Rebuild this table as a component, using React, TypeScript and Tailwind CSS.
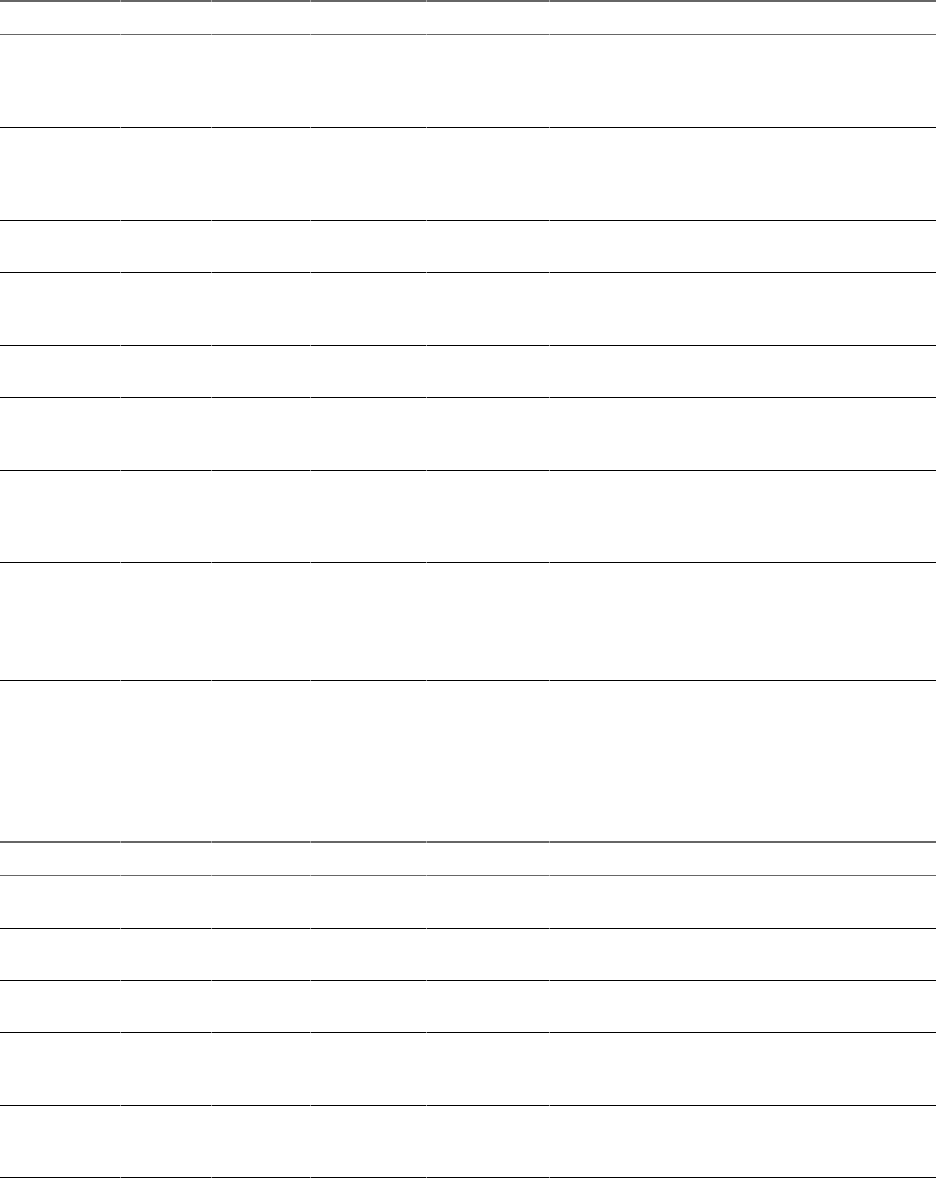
import React from "react";

const COLS = ["w-[120px]", "w-[90px]", "w-[98px]", "w-[115px]", "w-[122px]", "w-[386px]"];

function HeaderRow() {
  return (
    <div className="flex gap-px border-t-2 border-b border-[#a8a8a8]">
      {COLS.map((c, i) => (
        <div
          key={i}
          className={`${c} shrink-0 h-[35px] -mt-[2px] -mb-px border-t-2 border-b border-[#666666]`}
        />
      ))}
    </div>
  );
}

function BodyRow({ h }: { h: number }) {
  return (
    <div className="flex gap-px border-b border-[#8c8c8c]">
      {COLS.map((c, i) => (
        <div
          key={i}
          className={`${c} shrink-0 -mb-px border-b border-black`}
          style={{ height: h }}
        />
      ))}
    </div>
  );
}

export default function App() {
  const t1 = [93, 93, 52, 73, 52, 73, 92, 118];
  const t2 = [53, 52, 52, 73, 72];
  return (
    <div className="w-[936px] bg-white font-['Liberation_Sans',sans-serif]">
      <div className="flex flex-col">
        <HeaderRow />
        {t1.map((h, i) => (
          <BodyRow key={i} h={h} />
        ))}
      </div>
      <div className="h-[160px]" />
      <div className="flex flex-col">
        <HeaderRow />
        {t2.map((h, i) => (
          <BodyRow key={i} h={h} />
        ))}
      </div>
      <div className="h-px" />
    </div>
  );
}
